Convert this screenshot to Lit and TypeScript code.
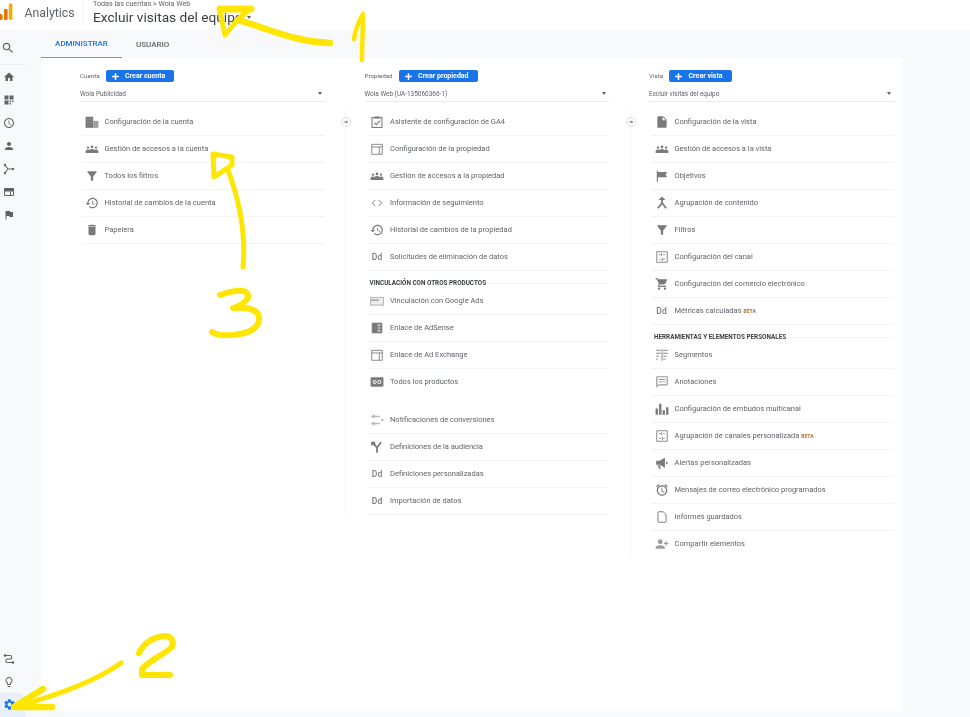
import { LitElement, html, css, svg } from 'lit';
import { customElement } from 'lit/decorators.js';
import { classMap } from 'lit/directives/class-map.js';

const G = '#7a7a7a';
const R = '#5f6368';
const line = (d: string, w = 1.8, c = G) =>
  svg`<path d=${d} fill="none" stroke=${c} stroke-width=${w} />`;
const solid = (d: string, c = G) => svg`<path d=${d} fill=${c} />`;

// material-ish glyphs on a 24 box
const ICONS: Record<string, unknown> = {
  search: solid('M15.5 14h-.79l-.28-.27C15.41 12.59 16 11.11 16 9.5 16 5.91 13.09 3 9.5 3S3 5.91 3 9.5 5.91 16 9.5 16c1.61 0 3.09-.59 4.23-1.57l.27.28v.79l5 4.99L20.49 19l-4.99-5zm-6 0C7.01 14 5 11.99 5 9.5S7.01 5 9.5 5 14 7.01 14 9.5 11.99 14 9.5 14z', R),
  home: solid('M10 20v-6h4v6h5v-8h3L12 3 2 12h3v8z', R),
  dash: solid('M3 3h8v8H3zM13 3h8v8h-8zM3 13h8v8H3zM13 13h3v3h-3zM18 13h3v3h-3zM13 18h3v3h-3z', R),
  clock: solid('M11.99 2C6.47 2 2 6.48 2 12s4.47 10 9.99 10C17.52 22 22 17.52 22 12S17.52 2 11.99 2zM12 20c-4.42 0-8-3.58-8-8s3.58-8 8-8 8 3.58 8 8-3.58 8-8 8zm.5-13H11v6l5.25 3.15.75-1.23-4.5-2.67z', R),
  person: solid('M12 12c2.21 0 4-1.79 4-4s-1.79-4-4-4-4 1.79-4 4 1.79 4 4 4zm0 2c-2.67 0-8 1.34-8 4v2h16v-2c0-2.66-5.33-4-8-4z', R),
  share: svg`${line('M4 4l6 8h9M4 20l6-8', 2.2, R)}<circle cx="4" cy="4" r="2.4" fill=${R} /><circle cx="4" cy="20" r="2.4" fill=${R} /><circle cx="20" cy="12" r="2.4" fill=${R} />`,
  table: svg`${line('M3 5h18v14H3zM15 11v8', 2, R)}${solid('M3 5h18v6H3z', R)}`,
  flag: solid('M14.4 6L14 4H5v17h2v-7h5.6l.4 2h7V6z', R),
  route: svg`${line('M5 5h9a3.5 3.5 0 0 1 0 7H9a3.5 3.5 0 0 0 0 7h10', 2.2, R)}<circle cx="4" cy="5" r="2.6" fill=${R} /><circle cx="20" cy="19" r="2.6" fill=${R} />`,
  bulb: solid('M9 21c0 .55.45 1 1 1h4c.55 0 1-.45 1-1v-1H9v1zm3-19C8.14 2 5 5.14 5 9c0 2.38 1.19 4.47 3 5.74V17c0 .55.45 1 1 1h6c.55 0 1-.45 1-1v-2.26c1.81-1.27 3-3.36 3-5.74 0-3.86-3.14-7-7-7zm2.85 11.1l-.85.6V16h-4v-2.3l-.85-.6C7.8 12.16 7 10.63 7 9c0-2.76 2.24-5 5-5s5 2.24 5 5c0 1.63-.8 3.16-2.15 4.1z', R),
  gear: solid('M19.14 12.94c.04-.3.06-.61.06-.94 0-.32-.02-.64-.07-.94l2.03-1.58c.18-.14.23-.41.12-.61l-1.92-3.32c-.12-.22-.37-.29-.59-.22l-2.39.96c-.5-.38-1.03-.7-1.62-.94l-.36-2.54c-.04-.24-.24-.41-.48-.41h-3.84c-.24 0-.43.17-.47.41l-.36 2.54c-.59.24-1.13.57-1.62.94l-2.39-.96c-.22-.08-.47 0-.59.22L2.74 8.87c-.12.21-.08.47.12.61l2.03 1.58c-.05.3-.09.63-.09.94s.02.64.07.94l-2.03 1.58c-.18.14-.23.41-.12.61l1.92 3.32c.12.22.37.29.59.22l2.39-.96c.5.38 1.03.7 1.62.94l.36 2.54c.05.24.24.41.48.41h3.84c.24 0 .44-.17.47-.41l.36-2.54c.59-.24 1.13-.56 1.62-.94l2.39.96c.22.08.47 0 .59-.22l1.92-3.32c.12-.22.07-.47-.12-.61l-2.01-1.58zM12 15.6c-1.98 0-3.6-1.62-3.6-3.6s1.62-3.6 3.6-3.6 3.6 1.62 3.6 3.6-1.62 3.6-3.6 3.6z', '#1a73e8'),
  building: svg`${solid('M1 3h13v19H1z')}${solid('M14 10h9v12h-9z', '#9e9e9e')}${solid('M4 7h2v2H4zM9 7h2v2H9zM4 12h2v2H4zM9 12h2v2H9zM17 14h2v2h-2z', '#9e9e9e')}`,
  group: svg`<circle cx="12" cy="8.5" r="2.3" fill=${G} /><circle cx="5" cy="9.5" r="2" fill=${G} /><circle cx="19" cy="9.5" r="2" fill=${G} />${solid('M1 19v-3c0-1.6 2-3 4-3 1 0 2 .3 2.6.8C8.8 12.7 10.4 12 12 12s3.2.7 4.4 1.8c.6-.5 1.6-.8 2.6-.8 2 0 4 1.4 4 3v3z')}`,
  filter: solid('M4.25 5.61C6.27 8.2 10 13 10 13v6c0 .55.45 1 1 1h2c.55 0 1-.45 1-1v-6s3.72-4.8 5.74-7.39c.51-.66.04-1.61-.79-1.61H5.04c-.83 0-1.3.95-.79 1.61z'),
  history: solid('M13 3c-4.97 0-9 4.03-9 9H1l3.89 3.89.07.14L9 12H6c0-3.87 3.13-7 7-7s7 3.13 7 7-3.13 7-7 7c-1.93 0-3.68-.79-4.94-2.06l-1.42 1.42C8.27 19.99 10.51 21 13 21c4.97 0 9-4.03 9-9s-4.03-9-9-9zm-1 5v5l4.28 2.54.72-1.21-3.5-2.08V8H12z'),
  trash: solid('M6 19c0 1.1.9 2 2 2h8c1.1 0 2-.9 2-2V7H6v12zM19 4h-3.5l-1-1h-5l-1 1H5v2h14V4z'),
  wizard: svg`${line('M3.5 4.5h17v17h-17z')}${solid('M8 2.5h8v3.5H8z')}${line('M7.5 13l3.5 3.5 6-7')}`,
  layout: line('M3 4h18v17H3zM3 8.5h18M16 8.5V21', 1.5),
  code: line('M9 7l-5 5 5 5M15 7l5 5-5 5', 1.7),
  ads: svg`<rect x="0" y="5" width="24" height="15" fill="#bdbdbd" /><rect x="2" y="7" width="20" height="11" fill="#eee" /><rect x="2" y="9.5" width="13" height="2" fill="#8a8a8a" />`,
  adsense: svg`${solid('M3 3h18v18H3z')}${solid('M13 6h5v2h-5zM13 11h5v2h-5zM13 16h5v2h-5z', '#eee')}`,
  products: svg`<rect x="1" y="4" width="22" height="16" rx="2" fill=${G} /><circle cx="8" cy="12" r="2.6" fill="none" stroke="#eee" stroke-width="1.8" /><circle cx="16" cy="12" r="2.6" fill="none" stroke="#eee" stroke-width="1.8" />`,
  swap: svg`${line('M3 6h14M8 3L3 6l5 3', 2.2, '#bdbdbd')}${line('M3 18h14M8 15l-5 3 5 3', 2.2, '#bdbdbd')}${solid('M19 10h4v4h-4z', '#bdbdbd')}`,
  fork: svg`${line('M12 22v-9L19 4M12 13L6 6', 3)}${solid('M2 3h7v6H2z')}`,
  doc: solid('M14 2H6c-1.1 0-2 .9-2 2v16c0 1.1.9 2 2 2h12c1.1 0 2-.9 2-2V8zm-1 7V3.5L18.5 9z'),
  goal: solid('M3 3h2v19H3zM5 5h16l-3 4.5 3 4.5H5z'),
  merge: svg`${line('M12 4v8M5 21l7-9 7 9', 3)}${solid('M12 1l6 6H6z')}`,
  channel: svg`${line('M3 3h18v18H3z', 1.5)}${line('M6.5 8h5M14 8h3M7 16h3M12.5 13v6M13 16h4M11.5 5.5v5', 1.3)}`,
  cart: solid('M7 18c-1.1 0-1.99.9-1.99 2S5.9 22 7 22s2-.9 2-2-.9-2-2-2zM1 2v2h2l3.6 7.59-1.35 2.45c-.16.28-.25.61-.25.96 0 1.1.9 2 2 2h12v-2H7.42c-.14 0-.25-.11-.25-.25l.03-.12.9-1.83h7.45c.75 0 1.41-.41 1.75-1.03l3.58-6.49c.08-.14.12-.31.12-.48 0-.55-.45-1-1-1H5.21l-.94-2H1zm16 16c-1.1 0-1.99.9-1.99 2s.89 2 1.99 2 2-.9 2-2-.9-2-2-2z'),
  segments: line('M2 4h8M2 9h8M2 14h5M2 19h3M12 2v20M14 4h8M14 9h8M14 14h6M14 19h4', 1.5),
  chat: solid('M20 2H4c-1.1 0-2 .9-2 2v18l4-4h14c1.1 0 2-.9 2-2V4c0-1.1-.9-2-2-2zm0 14H6l-2 2V4h16v12zM6 7h12v1.5H6zM6 11h12v1.5H6z', '#9a9a9a'),
  bars: solid('M1 11h4v11H1zM7 3h4v19H7zM13 14h4v8h-4zM19 9h4v13h-4z'),
  mega: solid('M2 8h6l9-5v17l-9-5H2zM5 16h3.5l1.2 6H6.5zM19 9.5c1.6.4 3 1.2 3 2.5s-1.4 2.1-3 2.5z'),
  alarm: solid('M22 5.72l-4.6-3.86-1.29 1.53 4.6 3.86L22 5.72zM7.88 3.39L6.6 1.86 2 5.71l1.29 1.53 4.59-3.85zM12.5 8H11v6l4.75 2.85.75-1.23-4-2.37V8zM12 4c-4.97 0-9 4.03-9 9s4.02 9 9 9c4.97 0 9-4.03 9-9s-4.03-9-9-9zm0 16c-3.87 0-7-3.13-7-7s3.13-7 7-7 7 3.13 7 7-3.13 7-7 7z'),
  page: line('M14 3H6.5A1.5 1.5 0 0 0 5 4.5v15A1.5 1.5 0 0 0 6.5 21h11a1.5 1.5 0 0 0 1.5-1.5V8z', 1.7),
  addUser: svg`<g transform="translate(24 0) scale(-1 1)">${solid('M15 12c2.21 0 4-1.79 4-4s-1.79-4-4-4-4 1.79-4 4 1.79 4 4 4zm-9-2V7H4v3H1v2h3v3h2v-3h3v-2H6zm9 4c-2.67 0-8 1.34-8 4v2h16v-2c0-2.66-5.33-4-8-4z', '#9e9e9e')}</g>`,
};

interface Row { label: string; icon: string; beta?: boolean; plain?: boolean; spaced?: boolean }
interface Section { heading?: string; rows: Row[] }
interface Column { label: string; action: string; selected: string; sections: Section[]; divider: boolean }

const COLUMNS: Column[] = [
  {
    label: 'Cuenta', action: 'Crear cuenta', selected: 'Wola Publicidad', divider: false,
    sections: [{ rows: [
      { label: 'Configuración de la cuenta', icon: 'building' },
      { label: 'Gestión de accesos a la cuenta', icon: 'group' },
      { label: 'Todos los filtros', icon: 'filter' },
      { label: 'Historial de cambios de la cuenta', icon: 'history' },
      { label: 'Papelera', icon: 'trash' },
    ] }],
  },
  {
    label: 'Propiedad', action: 'Crear propiedad', selected: 'Wola Web (UA-135060366-1)', divider: true,
    sections: [
      { rows: [
        { label: 'Asistente de configuración de GA4', icon: 'wizard' },
        { label: 'Configuración de la propiedad', icon: 'layout' },
        { label: 'Gestión de accesos a la propiedad', icon: 'group' },
        { label: 'Información de seguimiento', icon: 'code' },
        { label: 'Historial de cambios de la propiedad', icon: 'history' },
        { label: 'Solicitudes de eliminación de datos', icon: 'dd' },
      ] },
      { heading: 'VINCULACIÓN CON OTROS PRODUCTOS', rows: [
        { label: 'Vinculación con Google Ads', icon: 'ads' },
        { label: 'Enlace de AdSense', icon: 'adsense' },
        { label: 'Enlace de Ad Exchange', icon: 'layout' },
        { label: 'Todos los productos', icon: 'products', plain: true },
        { label: 'Notificaciones de conversiones', icon: 'swap', spaced: true },
        { label: 'Definiciones de la audiencia', icon: 'fork' },
        { label: 'Definiciones personalizadas', icon: 'dd' },
        { label: 'Importación de datos', icon: 'dd' },
      ] },
    ],
  },
  {
    label: 'Vista', action: 'Crear vista', selected: 'Excluir visitas del equipo', divider: true,
    sections: [
      { rows: [
        { label: 'Configuración de la vista', icon: 'doc' },
        { label: 'Gestión de accesos a la vista', icon: 'group' },
        { label: 'Objetivos', icon: 'goal' },
        { label: 'Agrupación de contenido', icon: 'merge' },
        { label: 'Filtros', icon: 'filter' },
        { label: 'Configuración del canal', icon: 'channel' },
        { label: 'Configuración del comercio electrónico', icon: 'cart' },
        { label: 'Métricas calculadas', icon: 'dd', beta: true },
      ] },
      { heading: 'HERRAMIENTAS Y ELEMENTOS PERSONALES', rows: [
        { label: 'Segmentos', icon: 'segments' },
        { label: 'Anotaciones', icon: 'chat' },
        { label: 'Configuración de embudos multicanal', icon: 'bars' },
        { label: 'Agrupación de canales personalizada', icon: 'channel', beta: true },
        { label: 'Alertas personalizadas', icon: 'mega' },
        { label: 'Mensajes de correo electrónico programados', icon: 'alarm' },
        { label: 'Informes guardados', icon: 'page' },
        { label: 'Compartir elementos', icon: 'addUser', plain: true },
      ] },
    ],
  },
];

const RAIL_TOP = ['home', 'dash', 'clock', 'person', 'share', 'table', 'flag'];

@customElement('app-root')
export class AppRoot extends LitElement {
  static styles = css`
    :host {
      display: block;
      position: relative;
      height: 717px;
      overflow: hidden;
      background: #f8f9fa;
      font-family: Roboto, 'Liberation Sans', sans-serif;
      color: #5f6368;
      /* the reference is a scaled-down capture, everything is a bit soft */
      filter: blur(0.4px);
    }
    svg { display: block; }

    .top {
      display: flex;
      align-items: flex-start;
      height: 30px;
      background: #fff;
    }
    .brand {
      display: flex;
      align-items: center;
      gap: 11.5px;
      width: 83px;
      height: 26px;
      border-right: 1px solid #f1f3f4;
    }
    .brand-name { font-size: 12.3px; line-height: 26px; color: #5f6368; }
    .crumbs { margin-left: 9px; }
    .crumb { font-size: 7.2px; line-height: 8px; color: #5f6368; white-space: nowrap; }
    .title {
      display: flex;
      align-items: center;
      gap: 4px;
      font-size: 13.7px;
      line-height: 18px;
      color: #3c4043;
      white-space: nowrap;
    }
    .caret {
      width: 0;
      height: 0;
      border-left: 2.5px solid transparent;
      border-right: 2.5px solid transparent;
      border-top: 3px solid #5f6368;
    }

    .frame { display: flex; height: 687px; }
    .rail {
      display: flex;
      flex-direction: column;
      flex: none;
      width: 41px;
      padding: 6px 0 0;
      box-sizing: border-box;
    }
    .rail-search {
      display: flex;
      align-items: center;
      height: 24px;
      width: 26px;
      padding-left: 1px;
      padding-bottom: 4px;
      box-sizing: content-box;
      border-bottom: 1px solid #eceef0;
    }
    .rail-item {
      display: flex;
      align-items: center;
      justify-content: center;
      width: 18px;
      height: 23px;
    }
    .rail-gap { flex: 1; }
    .rail-active {
      width: 26px;
      height: 24px;
      justify-content: flex-start;
      padding: 0 0 2px 3px;
      box-sizing: border-box;
      background: #e8f0fe;
      border-top-right-radius: 8px;
    }

    .main { flex: 1; display: flex; flex-direction: column; min-width: 0; }
    .tabs { display: flex; height: 28px; flex: none; }
    .tab {
      display: flex;
      align-items: center;
      justify-content: center;
      height: 28px;
      padding: 0 14px;
      box-sizing: border-box;
      font-size: 8px;
      font-weight: 500;
      color: #5f6368;
    }
    .tab-on { width: 81px; color: #1a73e8; border-bottom: 1.5px solid #f57c00; }
    .panel {
      width: 862px;
      height: 653px;
      padding: 12px 0 0 39px;
      box-sizing: border-box;
      background: #fff;
    }
    .cols {
      display: grid;
      grid-template-columns: repeat(3, 244.5px);
      column-gap: 40px;
      align-items: start;
    }

    .col-head { display: flex; align-items: center; gap: 6px; height: 12px; }
    .col-label { font-size: 6.2px; color: #5f6368; }
    .create {
      display: flex;
      align-items: center;
      height: 12px;
      padding: 0 9px 0 5px;
      border-radius: 2px;
      background: #1a73e8;
      color: #fff;
      font-size: 7px;
      font-weight: 700;
      white-space: nowrap;
    }
    .create svg { margin-right: 5.5px; }
    .select {
      display: flex;
      align-items: center;
      justify-content: space-between;
      height: 14.5px;
      margin-top: 4.5px;
      padding-right: 3px;
      border-bottom: 1px solid #e8eaed;
      font-size: 6.45px;
      color: #5f6368;
    }
    .list { position: relative; margin-top: 6.5px; }
    .list-line {
      margin-left: -19.5px;
      padding-left: 19.5px;
      border-left: 1px solid #f3f4f5;
    }
    .jump {
      position: absolute;
      top: 8.5px;
      left: -5px;
      display: flex;
      align-items: center;
      justify-content: center;
      width: 10px;
      height: 10px;
      box-sizing: border-box;
      border: 1px solid #dadce0;
      border-radius: 50%;
      background: #fff;
    }
    .heading {
      display: flex;
      align-items: center;
      padding: 9px 0 1px 4px;
      font-size: 6.35px;
      line-height: 7px;
      font-weight: 700;
      color: #3c4043;
      white-space: nowrap;
    }
    .heading::after { content: ''; flex: 1; height: 1px; background: #f3f4f5; }
    .row {
      display: flex;
      align-items: center;
      height: 27px;
      margin-left: 1px;
      box-sizing: border-box;
      border-bottom: 1px solid #f3f4f5;
      font-size: 7.5px;
      white-space: nowrap;
    }
    .row-plain { border-bottom-color: transparent; }
    .row-spaced { margin-top: 11px; }
    .row-icon {
      display: flex;
      align-items: center;
      justify-content: center;
      flex: none;
      width: 21px;
      margin-right: 2.5px;
    }
    .dd { font-size: 8.5px; font-weight: 500; color: #7a7a7a; }
    .beta {
      margin: 1px 0 0 2px;
      font-size: 5px;
      font-weight: 700;
      color: #b9722f;
    }

    .marks {
      position: absolute;
      left: 0;
      top: 0;
      pointer-events: none;
    }
  `;

  private glyph(name: string, size = 14) {
    return html`<svg width=${size} height=${size} viewBox="0 0 24 24">${ICONS[name]}</svg>`;
  }

  private renderRow(r: Row) {
    const cls = { row: true, 'row-plain': !!r.plain, 'row-spaced': !!r.spaced };
    return html`<div class=${classMap(cls)}>
      <span class="row-icon">${r.icon === 'dd' ? html`<span class="dd">Dd</span>` : this.glyph(r.icon)}</span>
      <span>${r.label}</span>
      ${r.beta ? html`<span class="beta">BETA</span>` : ''}
    </div>`;
  }

  private renderColumn(c: Column) {
    return html`<section>
      <div class="col-head">
        <span class="col-label">${c.label}</span>
        <span class="create">
          <svg width="9" height="9" viewBox="0 0 24 24"><path d="M10 3h4v7h7v4h-7v7h-4v-7H3v-4h7z" fill="#fff" /></svg>
          ${c.action}
        </span>
      </div>
      <div class="select"><span>${c.selected}</span><span class="caret"></span></div>
      <div class=${classMap({ list: true, 'list-line': c.divider })}>
        ${c.divider
          ? html`<span class="jump"><svg width="6" height="6" viewBox="0 0 24 24"><path d="M3 10h10V5l8 7-8 7v-5H3z" fill="#80868b" /></svg></span>`
          : ''}
        ${c.sections.map(
          (s) => html`${s.heading ? html`<div class="heading">${s.heading}</div>` : ''}${s.rows.map((r) => this.renderRow(r))}`,
        )}
      </div>
    </section>`;
  }

  render() {
    return html`
      <header class="top">
        <div class="brand">
          <svg width="13" height="26" viewBox="0 0 13 26">
            <rect x="-1" y="14" width="3.6" height="6" rx="1.6" fill="#e37400" />
            <rect x="4" y="9" width="3.6" height="11" rx="1" fill="#e37400" />
            <rect x="8.8" y="3.5" width="3.6" height="16.5" rx="1.4" fill="#f9ab00" />
          </svg>
          <span class="brand-name">Analytics</span>
        </div>
        <div class="crumbs">
          <div class="crumb">Todas las cuentas &gt; Wola Web</div>
          <div class="title">Excluir visitas del equipo<span class="caret"></span></div>
        </div>
      </header>
      <div class="frame">
        <nav class="rail">
          <div class="rail-search">${this.glyph('search', 14)}</div>
          ${RAIL_TOP.map((n) => html`<div class="rail-item">${this.glyph(n, 12)}</div>`)}
          <div class="rail-gap"></div>
          <div class="rail-item">${this.glyph('route', 12)}</div>
          <div class="rail-item">${this.glyph('bulb', 12)}</div>
          <div class="rail-item rail-active">${this.glyph('gear', 13)}</div>
        </nav>
        <main class="main">
          <div class="tabs">
            <div class="tab tab-on">ADMINISTRAR</div>
            <div class="tab">USUARIO</div>
          </div>
          <div class="panel">
            <div class="cols">${COLUMNS.map((c) => this.renderColumn(c))}</div>
          </div>
        </main>
      </div>
      <svg class="marks" width="970" height="717" viewBox="0 0 970 717" fill="none" stroke="#ffe600" stroke-linecap="round" stroke-linejoin="round">
        <path d="M330 43 C304 42 283 35 263 28 C252 24 244 22 238 20" stroke-width="6.5" />
        <path d="M220 9L251 9" stroke-width="7" />
        <path d="M220 12L225 35L238 19L249 10" stroke-width="5" />
        <path d="M362 60C362 44 363 28 363 14C359 21 355 30 354 39" stroke-width="4.5" />
        <path d="M243 267C246 235 241 205 228 170" stroke-width="5" />
        <path d="M213 154L232 157L232 165L214 177Z" stroke-width="5" />
        <path d="M220 295C230 291 243 289 247 293C251 299 242 305 233 308C246 307 258 309 259 317C260 326 252 332 240 334C228 336 218 336 212 332" stroke-width="6" />
        <path d="M121 663C100 678 70 692 14 707" stroke-width="5" />
        <path d="M43 689L14 707L52 707" stroke-width="6.5" />
        <path d="M139 653C144 643 153 637 165 636C172 636 174 642 172 647C165 654 150 660 142 669L142 675L170 675" stroke-width="6" />
      </svg>
    `;
  }
}
